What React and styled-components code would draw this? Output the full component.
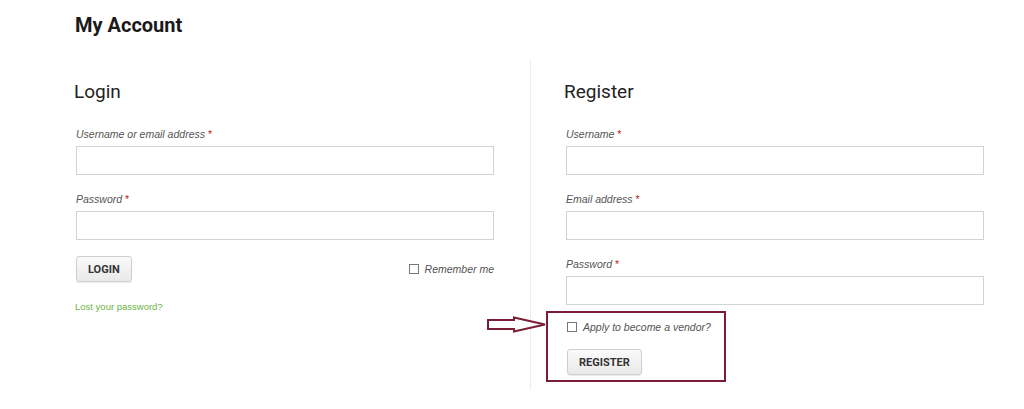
import React from 'react'
import styled, { createGlobalStyle } from 'styled-components'

const GlobalStyle = createGlobalStyle`
  html, body {
    margin: 0;
    padding: 0;
    background: #fff;
  }
  body {
    font-family: Roboto, "Liberation Sans", Arial, sans-serif;
    color: #222;
  }
`

const Page = styled.div`
  width: 1024px;
  height: 409px;
  padding-left: 75px;
  box-sizing: border-box;
  overflow: hidden;
`

const Title = styled.h1`
  margin: 13px 0 0;
  font-family: Roboto, sans-serif;
  font-size: 20px;
  line-height: 24px;
  font-weight: 700;
  color: #1a1a1a;
`

const Columns = styled.div`
  display: flex;
  margin-top: 23px;
`

const Column = styled.div`
  width: 420px;
  padding-top: 20px;
`

const Divider = styled.div`
  width: 1px;
  height: 330px;
  background: #ededed;
  margin: 0 34px 0 35px;
`

const Heading = styled.h2`
  margin: 0 0 23px -1px;
  font-family: Roboto, sans-serif;
  font-size: 19px;
  line-height: 24px;
  font-weight: 400;
  color: #222;
`

const Field = styled.div`
  display: flex;
  flex-direction: column;
  gap: 5px;
  margin: 0 0 17px 1px;
`

const Label = styled.label`
  font-family: "Liberation Sans", Arial, sans-serif;
  font-style: italic;
  font-size: 10.5px;
  line-height: 14px;
  color: #555;
  height: 14px;

  span {
    color: #b22;
    font-style: normal;
  }
`

const Input = styled.input`
  width: 418px;
  height: 29px;
  box-sizing: border-box;
  border: 1px solid #d2d2d2;
  background: #fff;
  margin: 0;
  padding: 0 6px;
  outline: none;
`

const Actions = styled.div`
  display: flex;
  align-items: center;
  justify-content: space-between;
  margin: -1px 0 0 1px;
  width: 418px;
`

const Button = styled.button`
  height: 26px;
  padding: 0 11px;
  box-sizing: border-box;
  border: 1px solid #cfcfcf;
  border-radius: 3px;
  background: linear-gradient(#fafafa, #e9e9e9);
  box-shadow: 0 1px 1px rgba(0, 0, 0, 0.08);
  font-family: Roboto, sans-serif;
  font-weight: 700;
  font-size: 11px;
  color: #333;
  cursor: pointer;
`

const Check = styled.label`
  display: flex;
  align-items: center;
  gap: 6px;
  font-family: "Liberation Sans", Arial, sans-serif;
  font-style: italic;
  font-size: 10.5px;
  line-height: 14px;
  color: #555;
`

const Box = styled.span`
  width: 8px;
  height: 8px;
  border: 1px solid #777;
  background: #fff;
  display: inline-block;
`

const LostLink = styled.a`
  display: block;
  margin-top: 18px;
  font-family: "Liberation Sans", Arial, sans-serif;
  font-size: 9.5px;
  line-height: 13px;
  color: #6cb545;
  text-decoration: none;
`

const Highlight = styled.div`
  position: relative;
  width: 180px;
  box-sizing: border-box;
  margin: -11px 0 0 -19px;
  padding: 7px 0 5px 19px;
  border: 2px solid #7a1d35;
`

const VendorRow = styled(Check)`
  margin-bottom: 15px;
`

const Arrow = styled.svg`
  position: absolute;
  right: calc(100% + 1px);
  top: 3px;
`

const Req = () => <span> *</span>

const App = () => {
  return (
    <Page>
      <GlobalStyle />
      <Title>My Account</Title>
      <Columns>
        <Column>
          <Heading>Login</Heading>
          <Field>
            <Label>Username or email address<Req /></Label>
            <Input type="text" />
          </Field>
          <Field>
            <Label>Password<Req /></Label>
            <Input type="password" />
          </Field>
          <Actions>
            <Button>LOGIN</Button>
            <Check>
              <Box />
              Remember me
            </Check>
          </Actions>
          <LostLink href="#">Lost your password?</LostLink>
        </Column>
        <Divider />
        <Column>
          <Heading>Register</Heading>
          <Field>
            <Label>Username<Req /></Label>
            <Input type="text" />
          </Field>
          <Field>
            <Label>Email address<Req /></Label>
            <Input type="email" />
          </Field>
          <Field>
            <Label>Password<Req /></Label>
            <Input type="password" />
          </Field>
          <Highlight>
            <Arrow width="60" height="17" viewBox="0 0 60 17">
              <polygon
                points="1,4 27,4 27,1.5 58,8.5 27,15.5 27,13 1,13"
                fill="#fff"
                stroke="#7a1d35"
                strokeWidth="2"
              />
            </Arrow>
            <VendorRow>
              <Box />
              Apply to become a vendor?
            </VendorRow>
            <Button>REGISTER</Button>
          </Highlight>
        </Column>
      </Columns>
    </Page>
  )
}

export default App
